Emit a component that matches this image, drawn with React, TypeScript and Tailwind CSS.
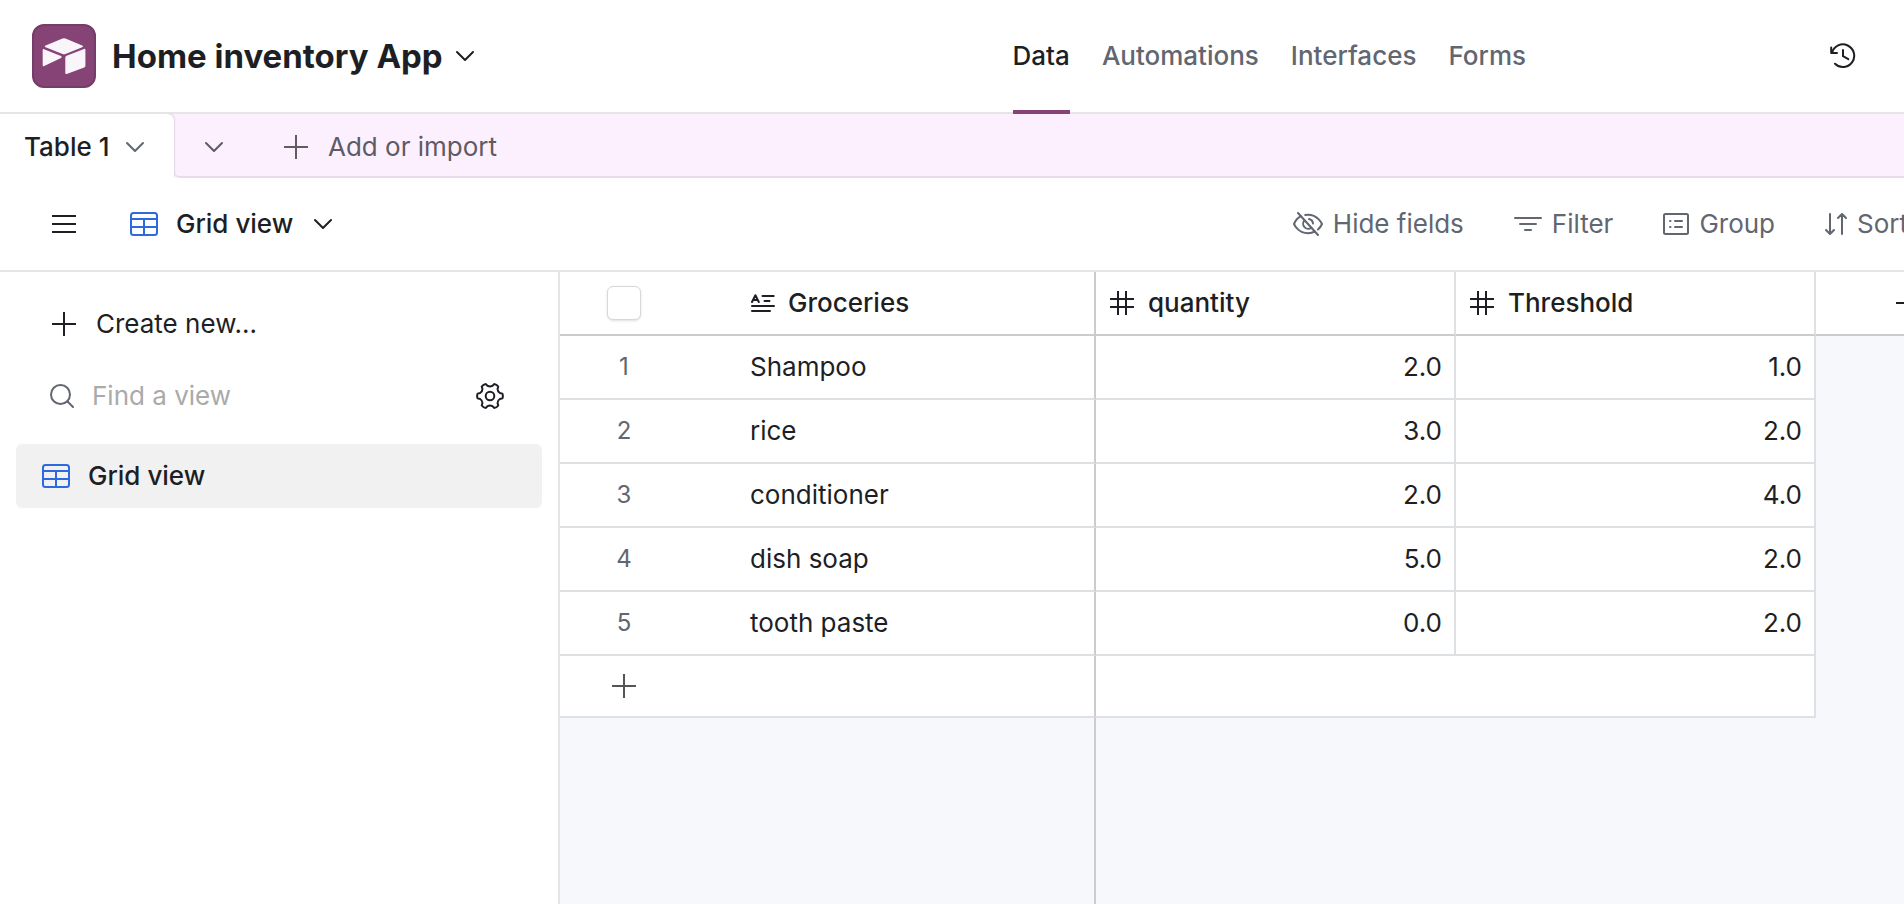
import React, { type ReactNode } from "react";

type IconProps = { className?: string };

function Chevron({ className = "" }: IconProps) {
  return (
    <svg viewBox="0 0 20 12" className={"h-3 w-5 shrink-0 " + className} fill="none" stroke="currentColor" strokeWidth="2" strokeLinecap="round" strokeLinejoin="round" aria-hidden="true">
      <path d="M2 2l8 8 8-8" />
    </svg>
  );
}

function Plus({ className = "" }: IconProps) {
  return (
    <svg viewBox="0 0 24 24" className={"h-6 w-6 shrink-0 " + className} fill="none" stroke="currentColor" strokeWidth="2" aria-hidden="true">
      <path d="M12 0v24M0 12h24" />
    </svg>
  );
}

function GridIcon() {
  return (
    <svg viewBox="0 0 28 24" className="h-6 w-7 shrink-0 text-[#2d6ae0]" fill="none" stroke="currentColor" strokeWidth="2" aria-hidden="true">
      <rect x="1" y="1" width="26" height="22" rx="2.5" />
      <path d="M1 7h26M1 15h26M14 7v16" />
    </svg>
  );
}

function HashIcon() {
  return (
    <svg viewBox="0 0 24 24" className="h-6 w-6 shrink-0" fill="none" stroke="currentColor" strokeWidth="2" aria-hidden="true">
      <path d="M8 0v24M16 0v24M0 8h24M0 16h24" />
    </svg>
  );
}

function LongTextIcon() {
  return (
    <svg viewBox="0 0 26 20" className="h-5 w-[26px] shrink-0" fill="none" stroke="currentColor" strokeWidth="2" strokeLinecap="round" strokeLinejoin="round" aria-hidden="true">
      <path d="M2 9L5.400 2.200L8.800 9M3.500 7h3.800M12.500 3h11.200M14.500 8h5M2 13h22M2 18h18" />
    </svg>
  );
}

function LogoMark() {
  return (
    <svg viewBox="0 0 44 36" className="h-9 w-11" fill="#faf5fa" aria-hidden="true">
      <path d="M20.500.500Q22-.2 23.500.500L40.200 7.400Q42 8.300 40.200 9.200L23.500 16Q22 16.700 20.500 16L3.600 9.200Q1.900 8.300 3.600 7.400Z" />
      <path d="M.7 12Q.7 10.700 2 11.200L19 18.100Q20.600 19 19 19.900L2.200 28Q.7 28.600.7 27.200Z" />
      <path d="M23.300 19.400Q23.300 18.200 24.600 17.700L42 11Q43.400 10.500 43.400 11.800V27.700Q43.400 29 42.200 29.500L24.700 35.900Q23.300 36.300 23.300 35Z" />
    </svg>
  );
}

function HistoryIcon() {
  return (
    <svg viewBox="0 0 26 26" className="h-[26px] w-[26px]" fill="none" stroke="currentColor" strokeWidth="2" strokeLinecap="round" strokeLinejoin="round" aria-hidden="true">
      <path d="M1.200 4.500V10H7" />
      <path d="M2 9.700A11.300 11.300 0 1 1 5 20.800" />
      <path d="M13 7v6.200l5.300 3" />
    </svg>
  );
}

function EyeOffIcon() {
  return (
    <svg viewBox="0 0 30 24" className="h-6 w-[30px] shrink-0" fill="none" stroke="currentColor" strokeWidth="2" strokeLinecap="round" strokeLinejoin="round" aria-hidden="true">
      <path d="M5 1l20 22" />
      <path d="M8 4.200C3.200 6.600 1 12 1 12s4 9.200 14 9.200c2.700 0 5-.7 7-1.700" />
      <path d="M12.200 3.100C13.100 2.900 14 2.800 15 2.800 25 2.800 29 12 29 12s-1.300 3-4 5.500" />
      <path d="M11.600 8.300a5 5 0 0 0 6.700 7.400M16 7.100a5 5 0 0 1 4 4.400" />
    </svg>
  );
}

function FilterIcon() {
  return (
    <svg viewBox="0 0 28 24" className="h-6 w-7 shrink-0" fill="none" stroke="currentColor" strokeWidth="2" strokeLinecap="round" aria-hidden="true">
      <path d="M1 6h26M6 12h16M11 18h6" />
    </svg>
  );
}

function GroupIcon() {
  return (
    <svg viewBox="0 0 26 24" className="h-6 w-[26px] shrink-0" fill="none" stroke="currentColor" strokeWidth="2" strokeLinecap="round" aria-hidden="true">
      <rect x="1" y="2" width="24" height="20" rx="1.500" />
      <path d="M7 9h.5M7 15h.5M12 9h7M12 15h7" />
    </svg>
  );
}

function SortIcon() {
  return (
    <svg viewBox="0 0 22 24" className="h-6 w-[22px] shrink-0" fill="none" stroke="currentColor" strokeWidth="2" strokeLinecap="round" strokeLinejoin="round" aria-hidden="true">
      <path d="M5 2v20M1 18l4 4 4-4M17 22V2M13 6l4-4 4 4" />
    </svg>
  );
}

function SearchIcon() {
  return (
    <svg viewBox="0 0 24 24" className="h-6 w-6 shrink-0 text-[#616670]" fill="none" stroke="currentColor" strokeWidth="2" strokeLinecap="round" aria-hidden="true">
      <circle cx="10.500" cy="10.500" r="9.500" />
      <path d="M17.500 17.500L23 23" />
    </svg>
  );
}

function polar(angle: number, radius: number) {
  const a = (angle * Math.PI) / 180;
  return `${(14 + radius * Math.cos(a)).toFixed(2)} ${(14 + radius * Math.sin(a)).toFixed(2)}`;
}

// Six teeth, each a flat outer edge, joined by rounded notches.
const gearPath =
  [0, 60, 120, 180, 240, 300]
    .map((t, i) => `${i === 0 ? "M" : "L"}${polar(t - 11, 12.6)}Q${polar(t, 13.4)} ${polar(t + 11, 12.6)}L${polar(t + 17, 10.3)}Q${polar(t + 30, 8.8)} ${polar(t + 43, 10.3)}`)
    .join("") + "Z";

function GearIcon() {
  return (
    <svg viewBox="0 0 28 28" className="h-7 w-7" fill="none" stroke="currentColor" strokeWidth="2" strokeLinejoin="round" aria-hidden="true">
      <circle cx="14" cy="14" r="4.300" />
      <path d={gearPath} />
    </svg>
  );
}

const rows = [
  { name: "Shampoo", quantity: "2.0", threshold: "1.0" },
  { name: "rice", quantity: "3.0", threshold: "2.0" },
  { name: "conditioner", quantity: "2.0", threshold: "4.0" },
  { name: "dish soap", quantity: "5.0", threshold: "2.0" },
  { name: "tooth paste", quantity: "0.0", threshold: "2.0" },
];

const sections = ["Automations", "Interfaces", "Forms"];

function ToolButton({ icon, label }: { icon: ReactNode; label: string }) {
  return (
    <button type="button" className="flex items-center gap-[10px] whitespace-nowrap">
      {icon}
      {label}
    </button>
  );
}

export default function App() {
  return (
    <div className="flex min-h-screen flex-col overflow-hidden bg-white font-['Inter','Liberation_Sans',sans-serif] text-[26px] leading-8 text-[#1d1f25]">
      <header className="flex h-[114px] border-b-2 border-[#e5e5e5] pr-12 pl-8">
        <div className="flex items-center gap-4">
          <div className="flex h-16 w-16 items-center justify-center rounded-xl border-2 border-[#743c69] bg-[#854475]">
            <LogoMark />
          </div>
          <button type="button" className="flex items-center gap-3">
            <h1 className="text-[33px] leading-10 font-bold whitespace-nowrap">Home inventory App</h1>
            <Chevron />
          </button>
        </div>
        <nav className="mr-[304px] -mb-0.5 ml-auto flex gap-8 font-medium text-[#616670]">
          <a href="#data" className="flex items-center border-b-4 border-[#854475] pt-0.5 text-[#1d1f25]">Data</a>
          {sections.map((s) => (
            <a key={s} href={"#" + s.toLowerCase()} className="flex items-center pb-0.5">{s}</a>
          ))}
        </nav>
        <button type="button" aria-label="Base history" className="self-center">
          <HistoryIcon />
        </button>
      </header>

      <div className="flex h-16 overflow-hidden bg-white">
        <div className="z-10 flex bg-[#fcf0ff]">
          <button type="button" className="flex w-[174px] items-center gap-4 rounded-tr-md bg-white pt-0.5 pl-6 font-medium whitespace-nowrap shadow-[0_0_2px_rgba(0,0,0,0.35)]">
            Table 1
            <Chevron className="text-[#616670]" />
          </button>
        </div>
        <div className="flex flex-1 items-center rounded-bl-md border-b-2 border-[#e9dbec] bg-[#fcf0ff] pt-1 text-[#5f5a63]">
          <button type="button" aria-label="All tables" className="ml-[30px]">
            <Chevron />
          </button>
          <button type="button" className="ml-[60px] flex items-center gap-5">
            <Plus />
            Add or import
          </button>
        </div>
      </div>

      <div className="flex h-[94px] items-center border-b-2 border-[#e5e5e5]">
        <button type="button" aria-label="Toggle sidebar" className="ml-[52px]">
          <svg viewBox="0 0 24 20" className="h-5 w-6" stroke="currentColor" strokeWidth="2" aria-hidden="true">
            <path d="M0 2h24M0 10h24M0 18h24" />
          </svg>
        </button>
        <button type="button" className="ml-[54px] flex items-center font-medium">
          <GridIcon />
          <span className="mr-5 ml-[18px] whitespace-nowrap">Grid view</span>
          <Chevron />
        </button>
        <div className="-mr-1 ml-auto flex gap-[50px] text-[#616670]">
          <ToolButton icon={<EyeOffIcon />} label="Hide fields" />
          <ToolButton icon={<FilterIcon />} label="Filter" />
          <ToolButton icon={<GroupIcon />} label="Group" />
          <ToolButton icon={<SortIcon />} label="Sort" />
        </div>
      </div>

      <div className="flex flex-1">
        <aside className="w-[560px] shrink-0 border-r-2 border-[#e5e5e5] px-4 pt-5">
          <button type="button" className="flex h-16 items-center gap-5 pl-9">
            <Plus />
            Create new...
          </button>
          <div className="mt-2 flex h-16 items-center pr-[38px] pl-[34px]">
            <SearchIcon />
            <input type="text" aria-label="Find a view" placeholder="Find a view" className="ml-[18px] min-w-0 flex-1 outline-none placeholder:text-[#aaaaaa]" />
            <button type="button" aria-label="View settings">
              <GearIcon />
            </button>
          </div>
          <a href="#grid-view" className="mt-4 flex h-16 items-center gap-[18px] rounded-md bg-[#f1f1f1] pl-[26px] font-medium">
            <GridIcon />
            Grid view
          </a>
        </aside>

        <main className="flex min-w-0 flex-1 flex-col overflow-hidden bg-[#f6f8fc]">
          <table className="w-full table-fixed border-separate border-spacing-0">
            <colgroup>
              <col className="w-44" />
              <col className="w-[360px]" />
              <col className="w-[360px]" />
              <col className="w-[360px]" />
              <col />
            </colgroup>
            <thead>
              <tr className="h-16 bg-white text-left">
                <th className="border-b-2 border-[#cccccc] p-0 pl-[47px]">
                  <input type="checkbox" aria-label="Select all rows" className="block h-[34px] w-[34px] appearance-none rounded-md border border-[#d8d8d8] bg-white shadow-sm" />
                </th>
                <th className="border-r-2 border-b-2 border-[#cccccc] p-0 pl-[14px] font-medium">
                  <div className="flex items-center gap-3"><LongTextIcon />Groceries</div>
                </th>
                <th className="border-r-2 border-b-2 border-r-[#dde1e3] border-b-[#cccccc] p-0 pl-[14px] font-medium">
                  <div className="flex items-center gap-[14px]"><HashIcon />quantity</div>
                </th>
                <th className="border-r-2 border-b-2 border-r-[#dde1e3] border-b-[#cccccc] p-0 pl-[14px] font-medium">
                  <div className="flex items-center gap-[14px]"><HashIcon />Threshold</div>
                </th>
                <th className="overflow-hidden border-b-2 border-[#cccccc] p-0 pl-20">
                  <button type="button" aria-label="Add field" className="block"><Plus /></button>
                </th>
              </tr>
            </thead>
            <tbody>
              {rows.map((r, i) => (
                <tr key={r.name} className="h-16">
                  <td className="border-b-2 border-[#dde1e3] bg-white p-0 pr-12 text-center text-2xl text-[#616670]">{i + 1}</td>
                  <td className="border-r-2 border-b-2 border-r-[#cccccc] border-b-[#dde1e3] bg-white p-0 pl-[14px]">{r.name}</td>
                  <td className="border-r-2 border-b-2 border-[#dde1e3] bg-white p-0 pr-3 text-right">{r.quantity}</td>
                  <td className="border-r-2 border-b-2 border-[#dde1e3] bg-white p-0 pr-3 text-right">{r.threshold}</td>
                  <td className="p-0" />
                </tr>
              ))}
              <tr className="h-[62px]">
                <td colSpan={2} className="border-r-2 border-b-2 border-r-[#cccccc] border-b-[#dde1e3] bg-white p-0 pl-[52px]">
                  <button type="button" aria-label="Add record" className="block text-[#555555]"><Plus /></button>
                </td>
                <td colSpan={2} className="border-r-2 border-b-2 border-[#dde1e3] bg-white p-0" />
                <td className="p-0" />
              </tr>
            </tbody>
          </table>
          <div className="w-[536px] flex-1 border-r-2 border-[#cccccc]" />
        </main>
      </div>
    </div>
  );
}
